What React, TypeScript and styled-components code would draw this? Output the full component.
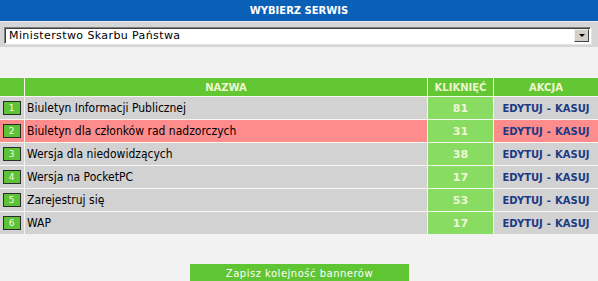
import React from "react";
import styled, { createGlobalStyle } from "styled-components";

const Global = createGlobalStyle`
  html, body { margin: 0; padding: 0; background: #f2f2f2; }
  body { font-family: "DejaVu Sans", Verdana, sans-serif; }
`;

const Page = styled.div`
  width: 598px;
  display: flex;
  flex-direction: column;
`;

const TitleBar = styled.div`
  height: 21px;
  background: #0a5fb6;
  color: #ffffff;
  font: bold 10px "DejaVu Sans", Verdana, sans-serif;
  display: flex;
  align-items: center;
  justify-content: center;
  border-bottom: 1px solid #e8eef4;
`;

const SelectBand = styled.div`
  height: 25px;
  background: #d6d6d6;
  display: flex;
  align-items: center;
  padding: 0 7px 0 4px;
`;

const SelectBox = styled.div`
  flex: 1;
  height: 17px;
  box-sizing: border-box;
  background: #fff;
  border-top: 1px solid #808080;
  border-left: 1px solid #808080;
  border-right: 1px solid #ffffff;
  border-bottom: 1px solid #ffffff;
  box-shadow: inset 1px 1px 0 #404040, 1px 1px 0 #e4e4e4;
  display: flex;
  align-items: center;
  font: 11px "DejaVu Sans", Verdana, sans-serif;
  letter-spacing: 0.4px;
  color: #000;
  padding-left: 4px;
  margin-top: 1px;
`;

const SelectText = styled.span`
  flex: 1;
`;

const DropButton = styled.div`
  width: 15px;
  height: 13px;
  margin-right: 1px;
  box-sizing: border-box;
  background: #d4d0c8;
  border-top: 1px solid #f0f0f0;
  border-left: 1px solid #f0f0f0;
  border-right: 1px solid #404040;
  border-bottom: 1px solid #404040;
  display: flex;
  align-items: center;
  justify-content: center;
`;

const Arrow = styled.div`
  width: 0;
  height: 0;
  border-left: 3px solid transparent;
  border-right: 3px solid transparent;
  border-top: 3px solid #000;
  margin-top: 1px;
`;

const Table = styled.div`
  margin-top: 30px;
  display: grid;
  grid-template-columns: 24px 1fr 65px 104px;
  gap: 1px;
  background: #f4f6f0;
  padding-top: 1px;
`;

const HeadCell = styled.div`
  height: 18px;
  background: #63c734;
  color: #eef6d0;
  font: bold 10px "DejaVu Sans", Verdana, sans-serif;
  display: flex;
  align-items: center;
  justify-content: center;
`;

const Cell = styled.div<{ $hl?: boolean }>`
  height: 22px;
  background: ${(p) => (p.$hl ? "#ff8c8c" : "#d2d2d2")};
  display: flex;
  align-items: center;
`;

const NumCell = styled(Cell)`
  justify-content: center;
`;

const Badge = styled.div`
  width: 18px;
  height: 14px;
  box-sizing: border-box;
  border: 1px solid #2a2a2a;
  background: #5bc335;
  color: #f4fbe8;
  font: 9px "DejaVu Sans", Verdana, sans-serif;
  display: flex;
  align-items: center;
  justify-content: center;
  margin-left: -1px;
`;

const NameCell = styled(Cell)`
  padding-left: 2px;
  font: 12px "DejaVu Sans Condensed", "DejaVu Sans", Tahoma, sans-serif;
  color: #000;
`;

const ClickCell = styled.div`
  height: 22px;
  background: #88dc62;
  color: #f2f6d8;
  font: bold 11px "DejaVu Sans", Verdana, sans-serif;
  display: flex;
  align-items: center;
  justify-content: center;
`;

const ActionCell = styled(Cell)`
  justify-content: center;
  font: bold 10px "DejaVu Sans", Verdana, sans-serif;
  color: #1b3a84;
  gap: 4px;
`;

const Footer = styled.div`
  display: flex;
  justify-content: center;
  padding-top: 30px;
`;

const SaveButton = styled.button`
  width: 219px;
  height: 18px;
  border: none;
  background: #5fc533;
  color: #ffffff;
  font: 10px "DejaVu Sans", Verdana, sans-serif;
  letter-spacing: 0.5px;
  padding: 0;
  margin-left: 1px;
`;

const rows = [
  { name: "Biuletyn Informacji Publicznej", clicks: 81 },
  { name: "Biuletyn dla członków rad nadzorczych", clicks: 31, hl: true },
  { name: "Wersja dla niedowidzących", clicks: 38 },
  { name: "Wersja na PocketPC", clicks: 17 },
  { name: "Zarejestruj się", clicks: 53 },
  { name: "WAP", clicks: 17 },
];

export default function App() {
  return (
    <Page>
      <Global />
      <TitleBar>WYBIERZ SERWIS</TitleBar>
      <SelectBand>
        <SelectBox>
          <SelectText>Ministerstwo Skarbu Państwa</SelectText>
          <DropButton>
            <Arrow />
          </DropButton>
        </SelectBox>
      </SelectBand>
      <Table>
        <HeadCell />
        <HeadCell>NAZWA</HeadCell>
        <HeadCell>KLIKNIĘĆ</HeadCell>
        <HeadCell>AKCJA</HeadCell>
        {rows.map((r, i) => (
          <React.Fragment key={i}>
            <NumCell $hl={r.hl}>
              <Badge>{i + 1}</Badge>
            </NumCell>
            <NameCell $hl={r.hl}>{r.name}</NameCell>
            <ClickCell>{r.clicks}</ClickCell>
            <ActionCell $hl={r.hl}>
              <span>EDYTUJ</span>-<span>KASUJ</span>
            </ActionCell>
          </React.Fragment>
        ))}
      </Table>
      <Footer>
        <SaveButton>Zapisz kolejność bannerów</SaveButton>
      </Footer>
    </Page>
  );
}
